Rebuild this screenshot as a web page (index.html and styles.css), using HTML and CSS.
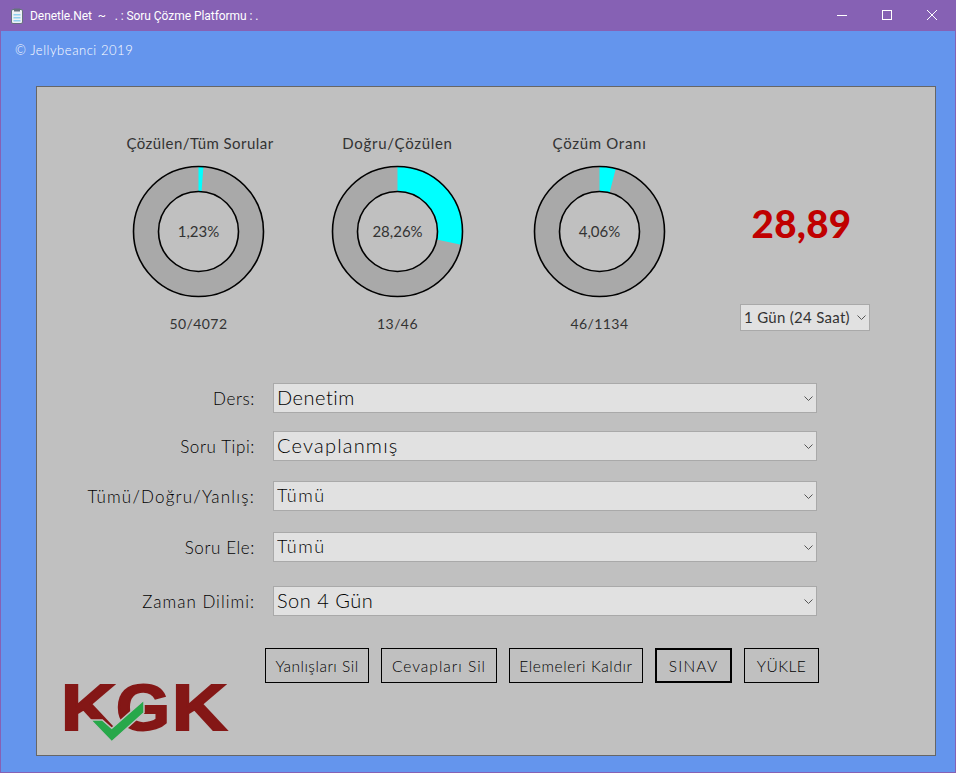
FILE: index.html
```html
<!DOCTYPE html>
<html>
<head>
	<title>Denetle.Net</title>
	<link rel="stylesheet" href="styles.css">
</head>
<body>
	<div class="window">
		<div class="titlebar">
			<svg class="app-icon" width="12" height="16" viewBox="0 0 12 16">
				<rect x="0.5" y="1.5" width="11" height="14" rx="1.5" fill="#eef1f4" stroke="#66727e"/>
				<rect x="3" y="0.5" width="6" height="3" fill="#66727e"/>
				<rect x="2.5" y="6" width="7" height="1.5" fill="#8fd0f0"/>
				<rect x="2.5" y="9" width="7" height="1.5" fill="#8fd0f0"/>
				<rect x="2.5" y="12" width="7" height="1.5" fill="#8fd0f0"/>
			</svg>
			<span class="app-title">Denetle.Net  ~   . : Soru Çözme Platformu : .</span>
			<div class="controls">
				<svg width="10" height="10" viewBox="0 0 10 10"><path d="M0 5.5H10" stroke="#fff"/></svg>
				<svg width="10" height="10" viewBox="0 0 10 10"><rect x="0.5" y="0.5" width="9" height="9" fill="none" stroke="#fff"/></svg>
				<svg width="10" height="10" viewBox="0 0 10 10"><path d="M0 0L10 10M10 0L0 10" stroke="#fff"/></svg>
			</div>
		</div>

		<div class="content">
			<p class="copyright">© Jellybeanci 2019</p>

			<div class="panel">
				<div class="stats">
					<div class="gauge">
						<div class="gauge-title title-tight">Çözülen/Tüm Sorular</div>
						<div class="ring">
							<svg width="133" height="133" viewBox="0 0 133 133">
								<circle cx="66.5" cy="66.5" r="52.5" class="ring-track"/>
								<circle cx="66.5" cy="66.5" r="52.5" class="ring-fill" pathLength="100" stroke-dasharray="1.23 100"/>
								<circle cx="66.5" cy="66.5" r="65" class="ring-line"/>
								<circle cx="66.5" cy="66.5" r="40" class="ring-line"/>
							</svg>
							<span class="ring-value">1,23%</span>
						</div>
						<div class="gauge-count">50/4072</div>
					</div>
					<div class="gauge">
						<div class="gauge-title">Doğru/Çözülen</div>
						<div class="ring">
							<svg width="133" height="133" viewBox="0 0 133 133">
								<circle cx="66.5" cy="66.5" r="52.5" class="ring-track"/>
								<circle cx="66.5" cy="66.5" r="52.5" class="ring-fill" pathLength="100" stroke-dasharray="28.26 100"/>
								<circle cx="66.5" cy="66.5" r="65" class="ring-line"/>
								<circle cx="66.5" cy="66.5" r="40" class="ring-line"/>
							</svg>
							<span class="ring-value">28,26%</span>
						</div>
						<div class="gauge-count">13/46</div>
					</div>
					<div class="gauge gauge-last">
						<div class="gauge-title">Çözüm Oranı</div>
						<div class="ring">
							<svg width="133" height="133" viewBox="0 0 133 133">
								<circle cx="66.5" cy="66.5" r="52.5" class="ring-track"/>
								<circle cx="66.5" cy="66.5" r="52.5" class="ring-fill" pathLength="100" stroke-dasharray="4.06 100"/>
								<circle cx="66.5" cy="66.5" r="65" class="ring-line"/>
								<circle cx="66.5" cy="66.5" r="40" class="ring-line"/>
							</svg>
							<span class="ring-value">4,06%</span>
						</div>
						<div class="gauge-count">46/1134</div>
					</div>
					<div class="score-box">
						<div class="score">28,89</div>
						<div class="select-wrap period-wrap">
							<select class="period">
								<option>1 Gün (24 Saat)</option>
							</select>
							<svg class="chevron" width="9" height="5" viewBox="0 0 9 5"><path d="M0.5 0.5L4.5 4.5L8.5 0.5" fill="none" stroke="#555"/></svg>
						</div>
					</div>
				</div>

				<form class="filters">
					<div class="row row-ders">
						<label for="ders">Ders:</label>
						<div class="select-wrap">
							<select id="ders" class="big"><option>Denetim</option></select>
							<svg class="chevron" width="9" height="5" viewBox="0 0 9 5"><path d="M0.5 0.5L4.5 4.5L8.5 0.5" fill="none" stroke="#555"/></svg>
						</div>
					</div>
					<div class="row row-tip">
						<label for="tip">Soru Tipi:</label>
						<div class="select-wrap">
							<select id="tip" class="big"><option>Cevaplanmış</option></select>
							<svg class="chevron" width="9" height="5" viewBox="0 0 9 5"><path d="M0.5 0.5L4.5 4.5L8.5 0.5" fill="none" stroke="#555"/></svg>
						</div>
					</div>
					<div class="row row-dogru">
						<label for="dogru">Tümü/Doğru/Yanlış:</label>
						<div class="select-wrap">
							<select id="dogru"><option>Tümü</option></select>
							<svg class="chevron" width="9" height="5" viewBox="0 0 9 5"><path d="M0.5 0.5L4.5 4.5L8.5 0.5" fill="none" stroke="#555"/></svg>
						</div>
					</div>
					<div class="row row-ele">
						<label for="ele">Soru Ele:</label>
						<div class="select-wrap">
							<select id="ele"><option>Tümü</option></select>
							<svg class="chevron" width="9" height="5" viewBox="0 0 9 5"><path d="M0.5 0.5L4.5 4.5L8.5 0.5" fill="none" stroke="#555"/></svg>
						</div>
					</div>
					<div class="row row-zaman">
						<label for="zaman">Zaman Dilimi:</label>
						<div class="select-wrap">
							<select id="zaman" class="big"><option>Son 4 Gün</option></select>
							<svg class="chevron" width="9" height="5" viewBox="0 0 9 5"><path d="M0.5 0.5L4.5 4.5L8.5 0.5" fill="none" stroke="#555"/></svg>
						</div>
					</div>
				</form>

				<div class="buttons">
					<button type="button" class="btn btn-yanlis">Yanlışları Sil</button>
					<button type="button" class="btn btn-cevap">Cevapları Sil</button>
					<button type="button" class="btn btn-eleme">Elemeleri Kaldır</button>
					<button type="button" class="btn btn-sinav">SINAV</button>
					<button type="button" class="btn btn-yukle">YÜKLE</button>
				</div>

				<svg class="logo" width="177" height="84" viewBox="0 0 177 84">
					<text x="4" y="64" class="logo-text" textLength="55" lengthAdjust="spacingAndGlyphs">K</text>
					<text x="59" y="64" class="logo-text" textLength="54" lengthAdjust="spacingAndGlyphs">G</text>
					<text x="115" y="64" class="logo-text" textLength="55" lengthAdjust="spacingAndGlyphs">K</text>
					<path d="M33.7 54H45.3L54.7 62.3L87 34V46.7L54.7 75.7Z" class="logo-check"/>
				</svg>
			</div>
		</div>
	</div>
</body>
</html>
```

FILE: styles.css
```css
* {
	box-sizing: border-box;
}

body {
	margin: 0;
	font-family: "Lato", "Liberation Sans", sans-serif;
	color: #333;
}

.window {
	width: 956px;
	height: 773px;
	background-color: #6495ed;
	border: 1px solid #8661b4;
	border-top: none;
	display: flex;
	flex-direction: column;
}

.titlebar {
	height: 31px;
	flex: none;
	background-color: #8661b4;
	display: flex;
	align-items: center;
	color: #fff;
	font-family: "Roboto", sans-serif;
	font-size: 12px;
}

.app-icon {
	margin-left: 10px;
	margin-right: 7px;
}

.app-title {
	white-space: pre;
	letter-spacing: -0.05px;
}

.controls {
	margin-left: auto;
	margin-top: -2px;
	display: flex;
	align-items: center;
	gap: 35px;
	padding-right: 18px;
}

.content {
	flex: 1;
	padding: 0 19px 16px 35px;
	display: flex;
	flex-direction: column;
}

.copyright {
	margin: 10px 0 0 -21px;
	height: 45px;
	font-size: 13px;
	font-weight: 300;
	line-height: 18px;
	letter-spacing: 0.55px;
	color: #fff;
}

.panel {
	width: 900px;
	height: 670px;
	background-color: #c0c0c0;
	border: 1px solid #666;
}

/* gauges */
.stats {
	display: flex;
	padding: 46px 0 0 62px;
	height: 296px;
}

.gauge {
	width: 199px;
	display: flex;
	flex-direction: column;
	align-items: center;
}

.gauge-last {
	margin-left: 3px;
}

.gauge-title {
	height: 20px;
	line-height: 20px;
	font-size: 15px;
	letter-spacing: 0.7px;
	margin-bottom: 12px;
}

.title-tight {
	letter-spacing: 0.45px;
	padding-left: 3px;
}

.ring {
	position: relative;
	width: 133px;
	height: 133px;
}

.ring svg {
	display: block;
}

.ring circle {
	fill: none;
}

.ring-track {
	stroke: #a9a9a9;
	stroke-width: 25;
}

.ring-fill {
	stroke: #00ffff;
	stroke-width: 25;
	transform: rotate(-90deg);
	transform-origin: 66.5px 66.5px;
}

.ring-line {
	stroke: #000;
	stroke-width: 1.6;
}

.ring-value {
	position: absolute;
	inset: 0;
	padding-bottom: 2px;
	display: flex;
	align-items: center;
	justify-content: center;
	font-size: 15px;
}

.gauge-count {
	margin-top: 16px;
	height: 20px;
	line-height: 20px;
	font-size: 14px;
	letter-spacing: 0.4px;
}

.score-box {
	margin-left: 41px;
	width: 130px;
	display: flex;
	flex-direction: column;
	align-items: center;
}

.score {
	margin-top: 64px;
	padding-right: 7px;
	height: 52px;
	line-height: 52px;
	font-size: 38.5px;
	font-weight: 900;
	letter-spacing: 0.3px;
	color: #c00000;
}

/* selects */
.select-wrap {
	position: relative;
	width: 544px;
	height: 30px;
}

.select-wrap select {
	width: 100%;
	height: 100%;
	appearance: none;
	-webkit-appearance: none;
	background-color: #e1e1e1;
	border: 1px solid #a9a9a9;
	border-radius: 0;
	padding: 0 24px 2px 3px;
	font-family: inherit;
	font-weight: 300;
	font-size: 18px;
	letter-spacing: 1.5px;
	color: #000;
}

.select-wrap select.big {
	font-size: 20px;
	letter-spacing: 0.5px;
}

.select-wrap select#tip {
	letter-spacing: 1.2px;
}

.chevron {
	position: absolute;
	right: 4px;
	top: 13px;
}

.period-wrap {
	width: 130px;
	height: 27px;
	margin-top: 55px;
}

.select-wrap select.period {
	font-size: 15px;
	font-weight: 400;
	padding: 0 0 1px 3px;
	letter-spacing: 0.3px;
	color: #333;
}

.period-wrap .chevron {
	top: 11px;
}

/* form */
.filters {
	display: block;
}

.row {
	display: flex;
	align-items: center;
	gap: 18px;
}

.row label {
	width: 218px;
	text-align: right;
	font-size: 17px;
	font-weight: 300;
	letter-spacing: 0.6px;
	color: #000;
}

.row-tip {
	margin-top: 18px;
}

.row-dogru {
	margin-top: 20px;
}

.row-dogru label {
	letter-spacing: 1.2px;
}

.row-ele {
	margin-top: 21px;
}

.row-zaman {
	margin-top: 24px;
}

.row-zaman label {
	letter-spacing: 1px;
}

/* buttons */
.buttons {
	display: flex;
	gap: 12px;
	margin: 32px 0 0 228px;
}

.btn {
	height: 35px;
	background: transparent;
	border: 1px solid #000;
	border-radius: 0;
	padding: 0;
	font-family: inherit;
	font-weight: 300;
	font-size: 15.5px;
	letter-spacing: 0.5px;
	color: #000;
}

.btn-yanlis {
	width: 104px;
}

.btn-cevap {
	width: 116px;
	letter-spacing: 1px;
}

.btn-eleme {
	width: 134px;
	letter-spacing: 0.6px;
}

.btn-sinav {
	width: 77px;
	border-width: 2px;
	letter-spacing: 1.2px;
}

.btn-yukle {
	width: 75px;
}

/* logo */
.logo {
	display: block;
	margin: -17px 0 0 20px;
}

.logo-text {
	font-family: "Liberation Sans", sans-serif;
	font-weight: bold;
	font-size: 65px;
	fill: #841716;
	stroke: #841716;
	stroke-width: 2;
}

.logo-check {
	fill: #27a84a;
	stroke: #c0c0c0;
	stroke-width: 1.5;
}
```
